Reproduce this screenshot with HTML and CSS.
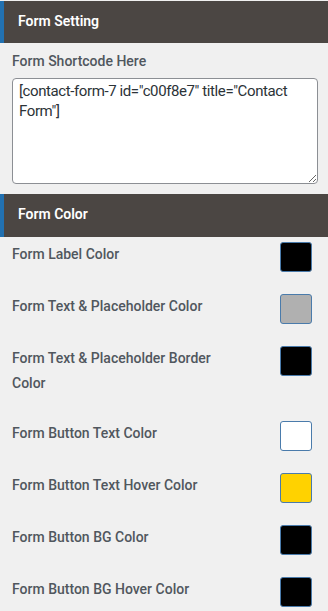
FILE: index.html
```html
<!DOCTYPE html>
<html>
<head>
<meta charset="utf-8">
<link rel="stylesheet" href="styles.css">
</head>
<body>
<div class="panel">
  <div class="section-head head-first">Form Setting</div>
  <div class="field">
    <label class="field-label">Form Shortcode Here</label>
    <textarea class="shortcode">[contact-form-7 id="c00f8e7" title="Contact Form"]</textarea>
  </div>
  <div class="section-head">Form Color</div>
  <div class="colors">
    <div class="color-row"><span class="color-label">Form Label Color</span><span class="swatch sw-black"></span></div>
    <div class="color-row"><span class="color-label">Form Text &amp; Placeholder Color</span><span class="swatch sw-grey"></span></div>
    <div class="color-row"><span class="color-label">Form Text &amp; Placeholder Border Color</span><span class="swatch sw-black"></span></div>
    <div class="color-row"><span class="color-label">Form Button Text Color</span><span class="swatch sw-white"></span></div>
    <div class="color-row"><span class="color-label">Form Button Text Hover Color</span><span class="swatch sw-yellow"></span></div>
    <div class="color-row"><span class="color-label">Form Button BG Color</span><span class="swatch sw-black"></span></div>
    <div class="color-row"><span class="color-label">Form Button BG Hover Color</span><span class="swatch sw-black"></span></div>
  </div>
</div>
</body>
</html>
```

FILE: styles.css
```css
html, body {
  margin: 0;
  padding: 0;
  background: #f0f0f0;
}
body {
  font-family: Roboto, "Liberation Sans", sans-serif;
  color: #50575e;
}
.panel {
  display: flex;
  flex-direction: column;
}
.section-head {
  height: 43px;
  box-sizing: border-box;
  background: #4b4643;
  border-left: 4px solid #2271b1;
  color: #ffffff;
  font-size: 14px;
  font-weight: 600;
  line-height: 40px;
  padding-left: 14px;
}
.head-first {
  margin-top: 1px;
  height: 42px;
}
.field {
  display: flex;
  flex-direction: column;
  padding: 8px 10px 10px 12px;
}
.field-label {
  font-size: 14px;
  font-weight: 500;
  line-height: 20px;
  margin-bottom: 7px;
}
.shortcode {
  box-sizing: border-box;
  width: 306px;
  height: 106px;
  border: 1px solid #8c8f94;
  border-radius: 4px;
  background: #ffffff;
  color: #2c3338;
  font-family: Roboto, "Liberation Sans", sans-serif;
  font-size: 15px;
  letter-spacing: -0.4px;
  line-height: 20px;
  padding: 2px 6px;
  margin: 0;
}
.colors {
  display: flex;
  flex-direction: column;
  padding: 5px 16px 0 12px;
}
.color-row {
  display: flex;
  justify-content: space-between;
  align-items: flex-start;
  margin-bottom: 22px;
}
.color-label {
  font-size: 14px;
  font-weight: 500;
  line-height: 25px;
  padding-bottom: 3px;
  max-width: 210px;
}
.swatch {
  flex: none;
  width: 32px;
  height: 30px;
  box-sizing: border-box;
  border: 1px solid #4a7bab;
  border-radius: 3px;
}
.sw-black { background: #000000; }
.sw-grey { background: #b0b0b0; }
.sw-white { background: #ffffff; }
.sw-yellow { background: #ffd200; }
```
